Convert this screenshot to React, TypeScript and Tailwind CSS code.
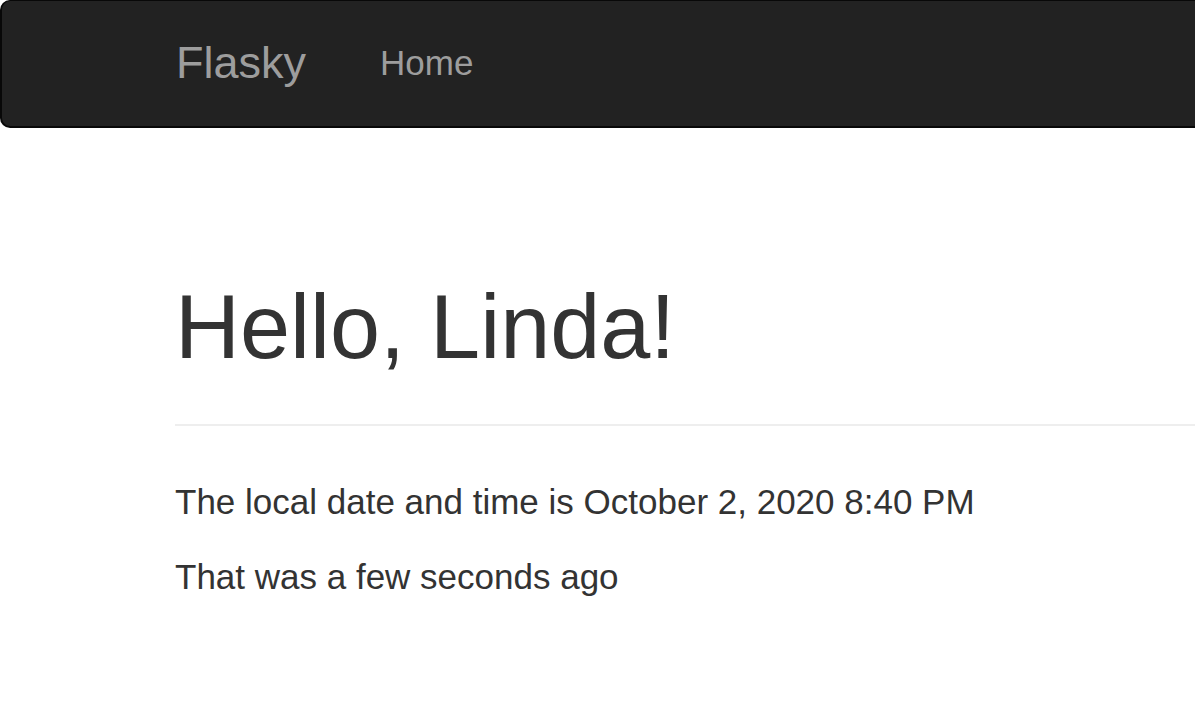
import React from 'react';

function App() {
  return (
    <div className="min-h-screen bg-white text-[#333] font-['Liberation_Sans',Arial,sans-serif]">
      {/* Navbar */}
      <nav className="h-[128px] bg-[#222] border-t border-l-2 border-b-2 border-[#080808] rounded-l-[10px] flex items-start">
        <a href="#" className="ml-[174px] pt-[37px] text-[45px] leading-[50px] text-[#9d9d9d]">Flasky</a>
        <ul className="flex ml-[74px] pt-[37px]">
          <li>
            <a href="#" className="block text-[35px] leading-[50px] text-[#9d9d9d]">Home</a>
          </li>
        </ul>
      </nav>

      {/* Content */}
      <div className="pl-[175px] pt-[150px]">
        <div className="border-b-2 border-[#eee] pb-[47px]">
          <h1 className="text-[90px] leading-[99px] font-normal">Hello, Linda!</h1>
        </div>
        <p className="mt-[51px] mb-[25px] text-[35px] leading-[50px]">The local date and time is October 2, 2020 8:40 PM</p>
        <p className="mb-[25px] text-[35px] leading-[50px]">That was a few seconds ago</p>
      </div>
    </div>
  );
}

export default App;
